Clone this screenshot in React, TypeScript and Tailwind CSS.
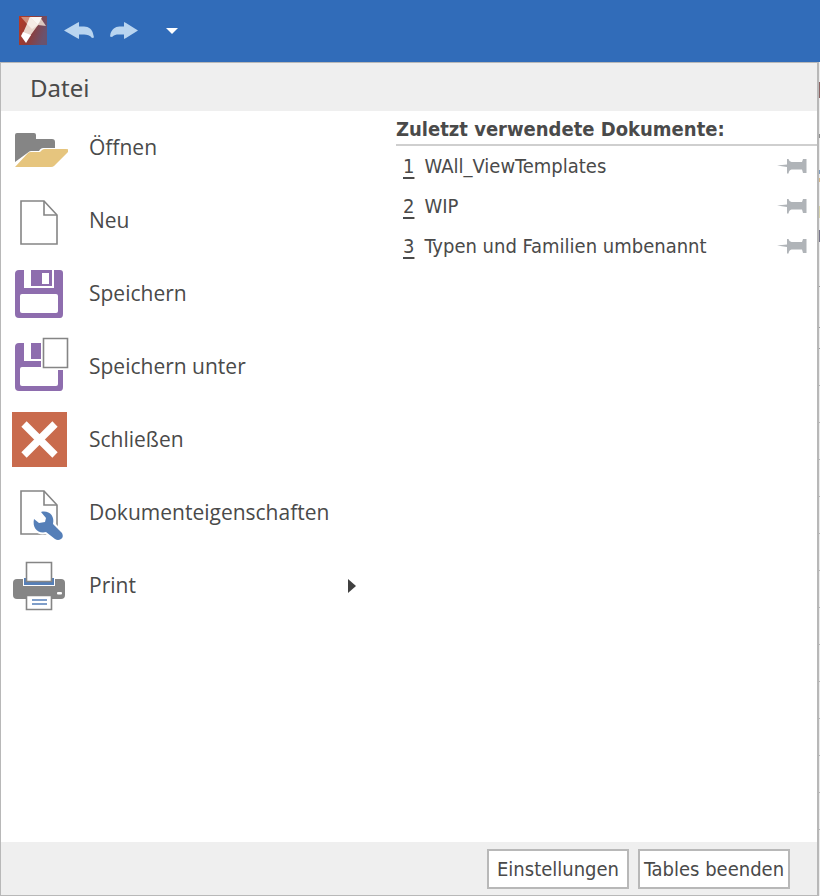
import type { ReactNode } from 'react';

function LogoIcon() {
  return (
    <svg width="30" height="30" viewBox="0 0 30 30" aria-hidden="true">
      <defs>
        <linearGradient id="logo" x1="0" y1="0" x2="1" y2="0.35">
          <stop offset="0" stopColor="#b83a24" />
          <stop offset="0.55" stopColor="#8e3c3a" />
          <stop offset="1" stopColor="#6a526e" />
        </linearGradient>
      </defs>
      <rect x="1" y="0" width="28" height="29" fill="url(#logo)" />
      <path d="M3 1h10l-4 7z" fill="#cf8f7c" />
      <path d="M22 1l6 9-8-1z" fill="#dcc8c0" />
      <path d="M12 1h12l-4 8-8-1z" fill="#fbf6f2" />
      <path d="M12 1L9 8l-4 9 7 3 8-11z" fill="#e9d6cc" />
      <path d="M12 1l8 8-6 4-5-5z" fill="#f6ece6" />
      <path d="M5 16l8 3-5 8-5-7z" fill="#fff" />
    </svg>
  );
}

function UndoIcon() {
  return (
    <svg width="30" height="18" viewBox="0 0 30 18" fill="#b9d5f0" aria-hidden="true">
      <path d="M0 8.500L13 1l2-1v4.500h5c5 0 8 3 9 7l1 4-2 .5c-2-3-5-3.500-8-3.500h-5V17l-2-1z" />
    </svg>
  );
}

function RedoIcon() {
  return (
    <svg width="28" height="18" viewBox="0 0 28 18" fill="#b9d5f0" aria-hidden="true">
      <path d="M28 8.500L16 1l-2-1v4.500H9.500C5 4.500 2 7.500.5 11.500L0 14.500l2 .5c2-2 4-2.500 7-2.500h5V17l2-1z" />
    </svg>
  );
}

function FolderIcon() {
  return (
    <svg width="56" height="56" viewBox="0 -2 56 56" aria-hidden="true">
      <path d="M3 40V13q0-2 2-2h17q2 0 2 2v4h16q3 0 3 3v6H31q-2 0-3 1.500l-1 1.500H19q-2 0-3 1.500z" fill="#858585" />
      <path d="M3 45l13-14q1-1 3-1h9l2-2q1-1 3-1h21q4 0 2 3L42 44q-1 1-3 1z" fill="#e6c57e" />
    </svg>
  );
}

function PageShape() {
  return (
    <g fill="none" stroke="#858585" strokeWidth="1.600">
      <path d="M9 6h23l13 14v29H9z" fill="#fff" />
      <path d="M32 6v14h13" />
    </g>
  );
}

function NewIcon() {
  return (
    <svg width="56" height="56" viewBox="0 -2 56 56" aria-hidden="true">
      <PageShape />
    </svg>
  );
}

function FloppyShape() {
  return (
    <>
      <path d="M7 4h41q3 0 3 3v41q0 4-3 4H7q-4 0-4-4V8q0-4 4-4z" fill="#8e6dae" />
      <path d="M12 3h7v19h-7zM19 20h20v2H19zM40 3h2v19h-4v-2h2z" fill="#fff" />
      <path d="M30 7h7v11h-7z" fill="#fff" />
      <rect x="8" y="28" width="38" height="19" rx="2" fill="#fff" />
    </>
  );
}

function SaveIcon() {
  return (
    <svg width="56" height="56" viewBox="0 0 56 56" aria-hidden="true">
      <FloppyShape />
    </svg>
  );
}

function SaveAsIcon() {
  return (
    <svg width="58" height="60" viewBox="0 -2 58 60" aria-hidden="true">
      <FloppyShape />
      <path d="M29 -1h29v32H29z" fill="#fff" />
      <path d="M31.500 -.5h24v29h-24z" fill="#fff" stroke="#858585" strokeWidth="1.600" />
    </svg>
  );
}

function CloseIcon() {
  return (
    <svg width="56" height="56" viewBox="0 0 56 56" aria-hidden="true">
      <rect width="55" height="55" fill="#c96b4d" />
      <path d="M12 12l31 31M43 12L12 43" stroke="#fff" strokeWidth="7.500" />
    </svg>
  );
}

function PropertiesIcon() {
  return (
    <svg width="56" height="56" viewBox="0 0 56 56" aria-hidden="true">
      <PageShape />
      <path
        d="M22 34c-2 9 4 15 12 13l9 7q3 2 6 0t1-6l-9-9c2-8-4-14-12-12l5 6-1 4-6 1z"
        fill="#557fb8"
        stroke="#fff"
        strokeWidth="4"
        paintOrder="stroke"
      />
    </svg>
  );
}

function PrintIcon() {
  return (
    <svg width="56" height="56" viewBox="0 0 56 56" aria-hidden="true">
      <rect x="1" y="21" width="52" height="20" rx="4" fill="#858585" />
      <path d="M11 18h32v10H11z" fill="#fff" />
      <path d="M12 20h30v7H12z" fill="#557fb8" />
      <path d="M14.500 4.500h25v19h-25z" fill="#fff" stroke="#858585" strokeWidth="1.600" />
      <path d="M14.500 37.500h25v14h-25z" fill="#fff" stroke="#858585" strokeWidth="1.600" />
      <path d="M20 42h15M20 46h15" stroke="#557fb8" strokeWidth="1.600" />
      <rect x="45" y="34" width="5" height="2.500" rx="1" fill="#fff" />
    </svg>
  );
}

function PinIcon() {
  return (
    <svg width="30" height="16" viewBox="0 0 30 16" fill="#b0b4b8" aria-hidden="true">
      <path d="M0 7.500l10-1V1h1.500q.5 2.500 3 3H25l1-3h3.500v14H26l-1-3.500H14.500q-2.500.5-3 4H10V9z" />
    </svg>
  );
}

type MenuEntry = { label: string; icon: ReactNode; submenu?: boolean };

const menuEntries: MenuEntry[] = [
  { label: 'Öffnen', icon: <FolderIcon /> },
  { label: 'Neu', icon: <NewIcon /> },
  { label: 'Speichern', icon: <SaveIcon /> },
  { label: 'Speichern unter', icon: <SaveAsIcon /> },
  { label: 'Schließen', icon: <CloseIcon /> },
  { label: 'Dokumenteigenschaften', icon: <PropertiesIcon /> },
  { label: 'Print', icon: <PrintIcon />, submenu: true },
];

const recentDocuments = ['WAll_ViewTemplates', 'WIP', 'Typen und Familien umbenannt'];

const gridRows = Array.from({ length: 13 }, (_, i) => i);

/** Sliver of the worksheet that shows beside the open menu. */
function SheetEdge() {
  return (
    <div className="flex w-px shrink-0 flex-col bg-[#ececec]" aria-hidden="true">
      <span className="mt-5 h-4 bg-[#8c6464]" />
      <span className="mt-9 h-1 bg-[#909090]" />
      <span className="mt-8 h-1 bg-[#7f9dc0]" />
      <span className="mt-1 h-1 bg-[#d9b98a]" />
      <span className="mt-6 h-3 bg-[#d8d4ae]" />
      <span className="mt-3 h-3 bg-[#77758a]" />
      <span className="mt-11 h-px bg-[#a0a0a0]" />
      <span className="mt-10 h-px bg-[#a0a0a0]" />
      <span className="mt-5 h-px bg-[#a0a0a0]" />
      {gridRows.map((row) => (
        <span key={row} className="mt-9 h-px bg-[#b8b8b8]" />
      ))}
    </div>
  );
}

export default function App() {
  return (
    <div className="flex min-h-screen flex-col bg-white font-['DejaVu_Sans_Condensed','DejaVu_Sans',sans-serif] text-[#4a4a4a]">
      <header className="flex h-[62px] shrink-0 items-center bg-[#316cb9] pb-px pl-[18px]">
        <LogoIcon />
        <button type="button" aria-label="Rückgängig" className="ml-4">
          <UndoIcon />
        </button>
        <button type="button" aria-label="Wiederholen" className="ml-4">
          <RedoIcon />
        </button>
        <button type="button" aria-label="Symbolleiste anpassen" className="ml-7">
          <svg width="12" height="6" viewBox="0 0 12 6" fill="#fff" aria-hidden="true">
            <path d="M0 0h12L6 6z" />
          </svg>
        </button>
      </header>

      <div className="flex flex-1">
        <div className="flex min-w-0 flex-1 flex-col border border-r-2 border-[#b8b8b8]">
          <h1 className="h-12 shrink-0 bg-[#efefef] pl-[29px] font-['Noto_Sans',sans-serif] text-2xl leading-[50px]">Datei</h1>

          <main className="flex flex-1">
            <nav aria-label="Datei" className="w-[395px] shrink-0 font-['Open_Sans','Noto_Sans',sans-serif] text-[21px]">
              {menuEntries.map((entry) => (
                <button key={entry.label} type="button" className="flex h-[73px] w-full items-center pl-[11px] text-left">
                  <span className="w-[77px] shrink-0">{entry.icon}</span>
                  <span className="flex-1">{entry.label}</span>
                  {entry.submenu && (
                    <svg width="8" height="14" viewBox="0 0 8 14" fill="#404040" className="mr-10 shrink-0" aria-hidden="true">
                      <path d="M0 0l8 7-8 7z" />
                    </svg>
                  )}
                </button>
              ))}
            </nav>

            <section aria-labelledby="recent-heading" className="min-w-0 flex-1">
              <h2 id="recent-heading" className="h-[35px] border-b-2 border-[#cfcfcf] text-xl font-bold leading-9">
                Zuletzt verwendete Dokumente:
              </h2>
              <ol>
                {recentDocuments.map((name, index) => (
                  <li key={name} className="flex h-10 items-center pl-[7px] pr-[10px]">
                    <button type="button" className="flex flex-1 gap-[10px] text-left text-xl leading-6">
                      <span className="underline underline-offset-4">{index + 1}</span>
                      <span>{name}</span>
                    </button>
                    <button type="button" aria-label={`${name} anheften`}>
                      <PinIcon />
                    </button>
                  </li>
                ))}
              </ol>
            </section>
          </main>

          <footer className="flex h-[53px] shrink-0 items-center justify-end gap-[9px] bg-[#efefef] pr-[27px] text-xl">
            <button type="button" className="h-10 w-[142px] whitespace-nowrap border-2 border-[#b8b8b8] bg-white">
              Einstellungen
            </button>
            <button type="button" className="h-10 w-[152px] whitespace-nowrap border-2 border-[#b8b8b8] bg-white">
              Tables beenden
            </button>
          </footer>
        </div>
        <SheetEdge />
      </div>
    </div>
  );
}
